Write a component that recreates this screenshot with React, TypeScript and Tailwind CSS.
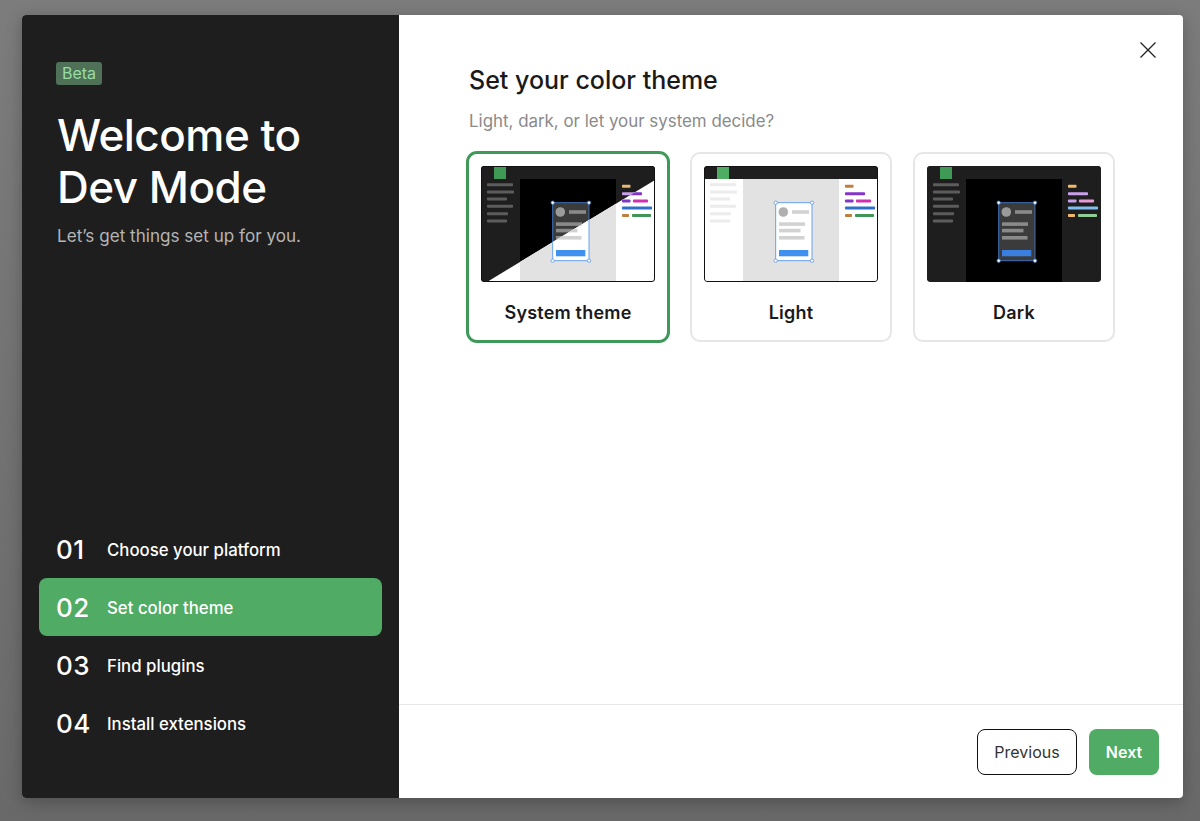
const font = "font-['Inter',sans-serif]";

type Palette = {
  bar: string; side: string; canvas: string; line: string; frameFill: string; frameStroke: string;
  handle: string; handleStroke: string; avatar: string; row: string; btn: string;
  orange: string; purple: string; purple2: string; pink: string; blue: string; orange2: string; green: string; logo: string;
};

const darkP: Palette = {
  bar: "#1e1e1e", side: "#1e1e1e", canvas: "#000000", line: "#5c5c5c", frameFill: "#3b3b3b", frameStroke: "#3f78c4",
  handle: "#ffffff", handleStroke: "#3f78c4", avatar: "#9a9a9a", row: "#8a8a8a", btn: "#3a7fe0",
  orange: "#f2b96b", purple: "#c9a0ea", purple2: "#c9a0ea", pink: "#e79ad6", blue: "#84bdf0", orange2: "#f2b96b", green: "#8fcf96", logo: "#3f9a55",
};

const lightP: Palette = {
  bar: "#1e1e1e", side: "#ffffff", canvas: "#e2e2e2", line: "#ececec", frameFill: "#ffffff", frameStroke: "#5a9bea",
  handle: "#ffffff", handleStroke: "#5a9bea", avatar: "#b0b0b0", row: "#d2d2d2", btn: "#3f90ef",
  orange: "#c07f3e", purple: "#8136c8", purple2: "#8136c8", pink: "#d02fb0", blue: "#2f6fc9", orange2: "#c07f3e", green: "#3f9658", logo: "#4fac63",
};

function Scene({ p, bar = true }: { p: Palette; bar?: boolean }) {
  const lines: [number, number][] = [[18.7, 26], [26, 27], [33, 20], [40.3, 26], [47.7, 21], [55, 20]];
  const Bar = ({ x, y, w, c }: { x: number; y: number; w: number; c: string }) => (
    <rect x={x} y={y - 1.5} width={w} height={3} rx={0.8} fill={c} />
  );
  return (
    <>
      <rect x={0} y={0} width={174} height={116} fill={p.side} />
      {bar && <rect x={0} y={0} width={174} height={13} fill={p.bar} />}
      <rect x={13} y={1} width={12} height={12} fill={p.logo} />
      {lines.map(([y, w]) => <Bar key={y} x={6} y={y} w={w} c={p.line} />)}
      <rect x={39} y={13} width={96} height={103} fill={p.canvas} />
      <rect x={71.7} y={36.7} width={36.3} height={58} fill={p.frameFill} stroke={p.frameStroke} strokeWidth={0.9} />
      <circle cx={79.3} cy={46} r={4.8} fill={p.avatar} />
      <rect x={88} y={44.2} width={17} height={3.6} fill={p.row} />
      <rect x={75} y={56.3} width={26} height={3.6} fill={p.row} />
      <rect x={75} y={62.8} width={21.5} height={3.6} fill={p.row} />
      <rect x={75} y={70} width={25.5} height={3.6} fill={p.row} />
      <rect x={75} y={84} width={29.3} height={6.3} fill={p.btn} />
      {[[71.7, 36.7], [108, 36.7], [71.7, 94.7], [108, 94.7]].map(([x, y]) => (
        <circle key={`${x}-${y}`} cx={x} cy={y} r={1.7} fill={p.handle} stroke={p.handleStroke} strokeWidth={0.8} />
      ))}
      <Bar x={141} y={20.3} w={8.5} c={p.orange} />
      <Bar x={141} y={27.7} w={20} c={p.purple} />
      <Bar x={141} y={35} w={8.5} c={p.purple2} />
      <Bar x={152} y={35} w={15} c={p.pink} />
      <Bar x={141} y={42} w={30} c={p.blue} />
      <Bar x={141} y={49.5} w={7} c={p.orange2} />
      <Bar x={151} y={49.5} w={19} c={p.green} />
    </>
  );
}

function Thumb({ mode }: { mode: "system" | "light" | "dark" }) {
  const id = `clip-${mode}`;
  return (
    <svg viewBox="0 0 174 116" className="block w-full h-[116px] rounded-[3px]" preserveAspectRatio="none">
      <defs>
        <clipPath id={id}><rect x={0} y={0} width={174} height={116} rx={2.5} /></clipPath>
        <clipPath id={`${id}-d`}><polygon points="174,14 174,116 6,116" /></clipPath>
      </defs>
      <g clipPath={`url(#${id})`}>
        {mode === "light" && <Scene p={lightP} />}
        {mode === "dark" && <Scene p={darkP} />}
        {mode === "system" && (
          <>
            <Scene p={{ ...darkP, orange: "#e7b875" }} />
            <g clipPath={`url(#${id}-d)`}>
              <Scene p={{ ...lightP, logo: "#ffffff" }} bar={false} />
            </g>
          </>
        )}
      </g>
      {mode !== "dark" && (
        <rect x={0.5} y={0.5} width={173} height={115} rx={2.5} fill="none" stroke="#111111" strokeWidth={1} />
      )}
    </svg>
  );
}

function Card({ label, mode, selected }: { label: string; mode: "system" | "light" | "dark"; selected?: boolean }) {
  return (
    <div className={`flex flex-col h-[190px] px-3 pt-3 rounded-[10px] border-2 bg-white ${selected ? "border-[#3f9a5a] ring-1 ring-[#3f9a5a]" : "border-[#e6e6e6]"}`}>
      <Thumb mode={mode} />
      <div className="flex-1 flex items-center justify-center pt-[2px] text-[18px] tracking-[0.2px] font-semibold text-[#1a1a1a]">{label}</div>
    </div>
  );
}

function Step({ n, label, active }: { n: string; label: string; active?: boolean }) {
  return (
    <div className={`flex items-center h-[58px] pl-[17px] rounded-lg text-white ${active ? "bg-[#50ab64]" : ""}`}>
      <span className="w-[51px] text-[26px] font-medium tracking-[0.5px]">{n}</span>
      <span className="pt-[3px] text-[16.8px] font-medium">{label}</span>
    </div>
  );
}

export default function App() {
  return (
    <div className={`h-[821px] w-[1200px] overflow-hidden pl-[22px] pt-[15px] bg-gradient-to-b from-[#7c7c7c] to-[#696969] ${font}`}>
      <div className="flex w-[1161px] h-[783px] rounded-[4px] overflow-hidden bg-white shadow-[0_4px_16px_rgba(0,0,0,0.25)]">
        <aside className="flex flex-col justify-between w-[377px] shrink-0 bg-[#1e1e1e] pb-[46px]">
          <div className="pl-[35px] pt-[46px]">
            <span className="inline-flex items-center h-[23px] -ml-px px-[6px] rounded-[3px] bg-[#4e7158] text-[#97dda6] text-[16px]">Beta</span>
            <h1 className="mt-[24px] text-[44px] leading-[52px] font-medium text-white tracking-[-0.5px]">Welcome to<br />Dev Mode</h1>
            <p className="mt-[11px] text-[17.1px] leading-[24px] text-[#b5b5b5]">Let’s get things set up for you.</p>
          </div>
          <div className="flex flex-col pl-[17px] pr-[17px]">
            <Step n="01" label="Choose your platform" />
            <Step n="02" label="Set color theme" active />
            <Step n="03" label="Find plugins" />
            <Step n="04" label="Install extensions" />
          </div>
        </aside>
        <main className="relative flex-1 flex flex-col">
          <button className="absolute right-[27px] top-[27px] text-[#222]" aria-label="Close">
            <svg width="16" height="16" viewBox="0 0 16 16" fill="none" className="block">
              <path d="M0.5 0.5L15.5 15.5M15.5 0.5L0.5 15.5" stroke="#222222" strokeWidth="1.3" />
            </svg>
          </button>
          <div className="flex-1 pl-[68px] pr-[68px]">
            <h2 className="mt-[49px] pl-[2px] text-[25px] leading-[32px] font-medium text-[#1a1a1a]">Set your color theme</h2>
            <p className="mt-[13px] pl-[2px] text-[16.9px] leading-[24px] text-[#8a8a8a]">Light, dark, or let your system decide?</p>
            <div className="mt-[19px] grid grid-cols-3 gap-[21px]">
              <Card label="System theme" mode="system" selected />
              <Card label="Light" mode="light" />
              <Card label="Dark" mode="dark" />
            </div>
          </div>
          <footer className="flex justify-end items-center gap-[12px] h-[94px] pr-[24px] border-t border-[#e6e6e6]">
            <button className="w-[100px] h-[46px] rounded-[8px] border-[1.5px] border-[#111111] bg-white text-[16px] text-[#333]">Previous</button>
            <button className="w-[70px] h-[46px] rounded-[8px] bg-[#50ab64] text-[16px] font-semibold text-white">Next</button>
          </footer>
        </main>
      </div>
    </div>
  );
}
